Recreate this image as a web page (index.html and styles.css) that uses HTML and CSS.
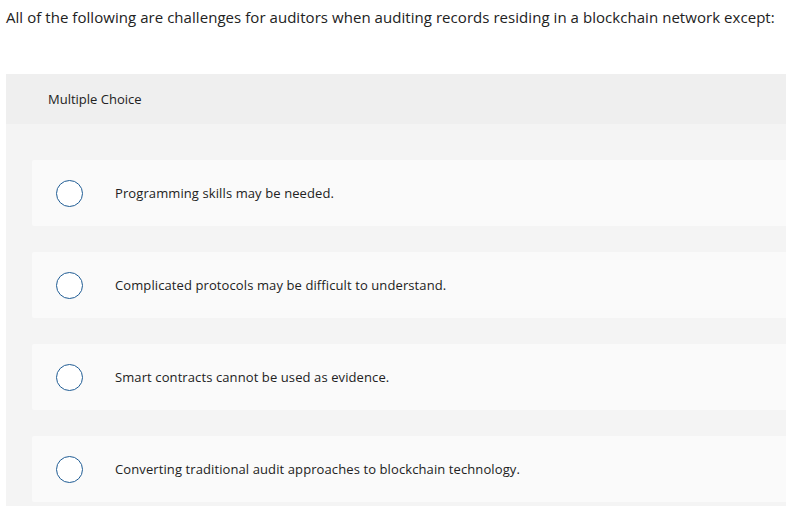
FILE: index.html
```html
<!DOCTYPE html>
<html>
<head>
<meta charset="utf-8">
<link rel="stylesheet" href="styles.css">
</head>
<body>
<div class="page">
  <p class="question">All of the following are challenges for auditors when auditing records residing in a blockchain network except:</p>
  <div class="panel">
    <div class="panel-head">Multiple Choice</div>
    <div class="panel-body">
      <div class="option"><span class="radio"></span><span class="label">Programming skills may be needed.</span></div>
      <div class="option"><span class="radio"></span><span class="label">Complicated protocols may be difficult to understand.</span></div>
      <div class="option"><span class="radio"></span><span class="label">Smart contracts cannot be used as evidence.</span></div>
      <div class="option"><span class="radio"></span><span class="label">Converting traditional audit approaches to blockchain technology.</span></div>
    </div>
  </div>
</div>
</body>
</html>
```
FILE: styles.css
```css
html, body {
  margin: 0;
  padding: 0;
  background: #ffffff;
}
body {
  font-family: "Open Sans", "Lato", sans-serif;
  color: #222222;
}
.page {
  padding: 6px 0 0 6px;
}
.question {
  margin: 0;
  font-size: 15px;
  line-height: 22px;
  height: 68px;
  letter-spacing: 0.05px;
}
.panel {
  background: #f4f4f4;
}
.panel-head {
  background: #efefef;
  height: 50px;
  display: flex;
  align-items: center;
  padding-left: 42px;
  font-size: 13px;
}
.panel-body {
  padding: 36px 0 4px 26px;
  display: flex;
  flex-direction: column;
  gap: 26px;
}
.option {
  background: #fafafa;
  height: 66px;
  display: flex;
  align-items: center;
  padding-left: 24px;
  border-radius: 2px 0 0 2px;
}
.radio {
  width: 25px;
  height: 25px;
  border: 1.5px solid #1f5c94;
  border-radius: 50%;
  background: #ffffff;
  flex: none;
}
.label {
  margin-left: 32px;
  font-size: 13px;
  letter-spacing: 0.1px;
}
```
